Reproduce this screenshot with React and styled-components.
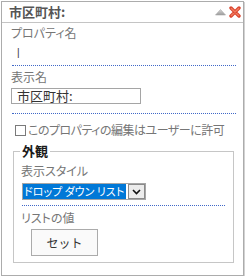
import React from "react";
import styled, { createGlobalStyle } from "styled-components";

const GlobalStyle = createGlobalStyle`
  body {
    margin: 0;
    background: #ffffff;
    font-family: "Noto Sans CJK JP", "Noto Sans", sans-serif;
  }
`;

const Panel = styled.div`
  box-sizing: border-box;
  margin: 1px 0 0 1px;
  width: 243px;
  height: 275px;
  border: 1px solid #acacac;
  box-shadow: 1px 1px 0 #d2d2d2;
  background: #fff;
  font-feature-settings: "palt";
`;

const Header = styled.div`
  display: flex;
  align-items: center;
  justify-content: space-between;
  height: 20px;
  padding: 0 2px 0 7px;
  border-bottom: 1px solid #c4c4c4;
`;

const Title = styled.div`
  font-size: 13px;
  font-weight: bold;
  line-height: 20px;
  color: #555;
`;

const Tools = styled.div`
  display: flex;
  align-items: center;
  gap: 3px;
`;

const Body = styled.div`
  padding: 2px 7px 0 10px;
`;

const Section = styled.div`
  border-bottom: 1px dotted #4068c8;
  padding-bottom: ${(p) => p.$pb || 0}px;
`;

const Label = styled.div`
  font-size: 12px;
  line-height: 16px;
  color: #767676;
  margin-left: -1px;
  padding-top: ${(p) => p.$pt || 0}px;
`;

const ValueRow = styled.div`
  height: 24px;
  line-height: 24px;
  padding-left: 5px;
  font-family: "Liberation Sans", sans-serif;
  font-size: 10px;
  color: #333;
`;

const TextBox = styled.div`
  box-sizing: border-box;
  margin: 3px 0 0 -1px;
  width: 130px;
  height: 16px;
  border: 1px solid #a5a5a5;
  padding-left: 5px;
  font-size: 13px;
  line-height: 14px;
  color: #333;
`;

const CheckRow = styled.label`
  display: flex;
  align-items: center;
  gap: 2px;
  padding-top: 8px;
  height: 16px;
  font-size: 12px;
  line-height: 16px;
  letter-spacing: -0.5px;
  color: #767676;
`;

const Box = styled.span`
  box-sizing: border-box;
  width: 11px;
  height: 11px;
  margin-left: 3px;
  border: 1px solid #7a7a7a;
  background: #fff;
`;

const Group = styled.fieldset`
  margin: 6px 2px 0 1px;
  padding: 0 8px 6px 8px;
  border: 1px solid #c6c6c6;
  min-width: 0;
`;

const Legend = styled.legend`
  margin-left: -2px;
  padding: 0 2px;
  font-size: 13px;
  font-weight: bold;
  line-height: 14px;
  color: #1a1a1a;
`;

const Select = styled.div`
  box-sizing: border-box;
  display: flex;
  align-items: center;
  margin-top: 4px;
  width: 124px;
  height: 17px;
  border: 1px solid #a6a6a6;
  background: #fff;
`;

const Chosen = styled.div`
  flex: 1;
  height: 15px;
  background: #0078d7;
  color: #fff;
  font-size: 11px;
  line-height: 15px;
  padding-left: 1px;
  white-space: pre;
  overflow: hidden;
`;

const Arrow = styled.div`
  box-sizing: border-box;
  display: flex;
  align-items: center;
  justify-content: center;
  width: 17px;
  height: 15px;
  margin-left: 2px;
  border: 1px solid #8a8a8a;
  background: #ececec;
`;

const SetButton = styled.button`
  box-sizing: border-box;
  display: block;
  margin: 3px 0 0 9px;
  width: 67px;
  height: 27px;
  border: 1px solid #ababab;
  background: #fafafa;
  font-family: inherit;
  font-size: 12px;
  color: #333;
  padding: 0;
`;

function CollapseIcon() {
  return (
    <svg width="11" height="7" viewBox="0 0 11 7">
      <defs>
        <linearGradient id="tri" x1="0" y1="0" x2="0" y2="1">
          <stop offset="0" stopColor="#d8d8d8" />
          <stop offset="1" stopColor="#9a9a9a" />
        </linearGradient>
      </defs>
      <path d="M5.5 0.5 L10.5 6 L0.5 6 Z" fill="url(#tri)" stroke="#a8a8a8" strokeWidth="0.6" />
    </svg>
  );
}

function CloseIcon() {
  return (
    <svg width="12" height="12" viewBox="0 0 12 12">
      <path d="M2 2 L10 10 M10 2 L2 10" stroke="#d9442e" strokeWidth="3.4" strokeLinecap="round" />
      <path d="M2.4 2.4 L9.6 9.6 M9.6 2.4 L2.4 9.6" stroke="#f27b5e" strokeWidth="1.4" strokeLinecap="round" />
    </svg>
  );
}

export default function App() {
  return (
    <>
      <GlobalStyle />
      <Panel>
        <Header>
          <Title>市区町村:</Title>
          <Tools>
            <CollapseIcon />
            <CloseIcon />
          </Tools>
        </Header>
        <Body>
          <Section>
            <Label>プロパティ名</Label>
            <ValueRow>|</ValueRow>
          </Section>
          <Section $pb={9}>
            <Label $pt={3}>表示名</Label>
            <TextBox>市区町村:</TextBox>
          </Section>
          <CheckRow>
            <Box />
            このプロパティの編集はユーザーに許可
          </CheckRow>
          <Group>
            <Legend>外観</Legend>
            <Section $pb={5}>
              <Label $pt={5}>表示スタイル</Label>
              <Select>
                <Chosen>{"ドロップ ダウン リスト"}</Chosen>
                <Arrow>
                  <svg width="9" height="6" viewBox="0 0 9 6">
                    <path d="M1 1 L4.5 4.5 L8 1" fill="none" stroke="#111" strokeWidth="1.6" />
                  </svg>
                </Arrow>
              </Select>
            </Section>
            <Label $pt={4}>リストの値</Label>
            <SetButton>セット</SetButton>
          </Group>
        </Body>
      </Panel>
    </>
  );
}
